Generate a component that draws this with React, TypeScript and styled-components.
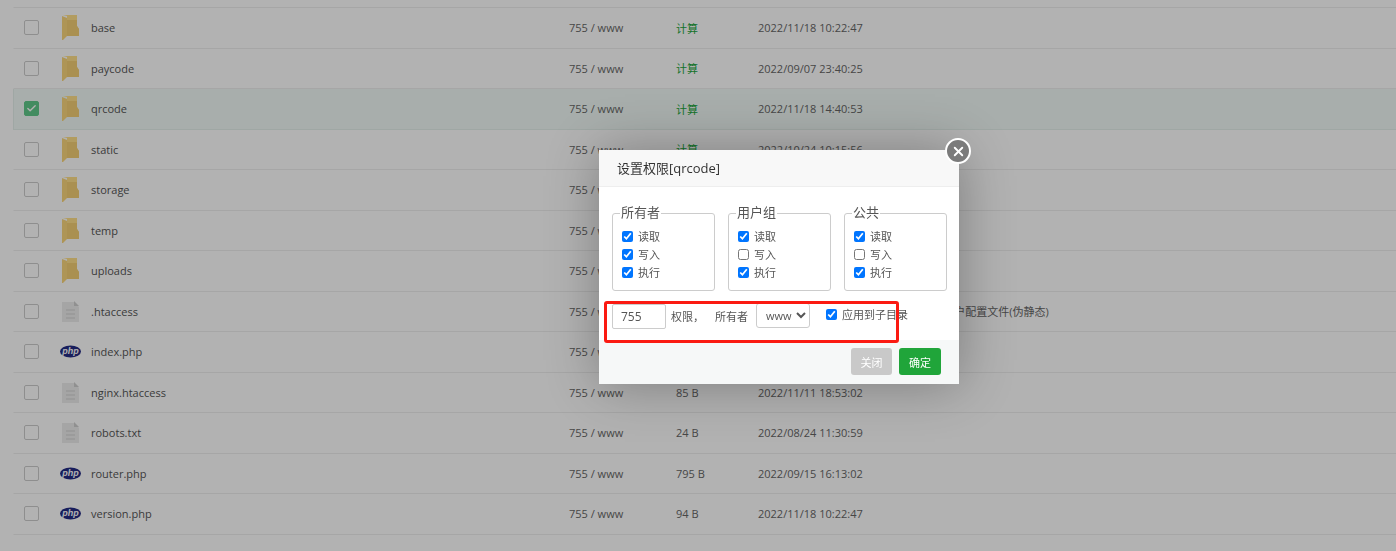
import React from 'react';
import styled, { createGlobalStyle } from 'styled-components';
import { Check, X } from 'lucide-react';

type FileKind = 'folder' | 'file' | 'php';

type FileRow = {
  name: string;
  kind: FileKind;
  size: string;
  date: string;
  remark?: string;
  selected?: boolean;
};

const rows: FileRow[] = [
  { name: 'app', kind: 'folder', size: '计算', date: '2022/11/18 10:22:47' },
  { name: 'base', kind: 'folder', size: '计算', date: '2022/11/18 10:22:47' },
  { name: 'paycode', kind: 'folder', size: '计算', date: '2022/09/07 23:40:25' },
  { name: 'qrcode', kind: 'folder', size: '计算', date: '2022/11/18 14:40:53', selected: true },
  { name: 'static', kind: 'folder', size: '计算', date: '2022/10/24 10:15:56' },
  { name: 'storage', kind: 'folder', size: '计算', date: '2022/10/24 10:15:56' },
  { name: 'temp', kind: 'folder', size: '计算', date: '2022/11/18 10:22:47' },
  { name: 'uploads', kind: 'folder', size: '计算', date: '2022/11/18 10:22:47' },
  { name: '.htaccess', kind: 'file', size: '0 B', date: '2022/11/11 18:53:02', remark: 'PHP用户配置文件(伪静态)' },
  { name: 'index.php', kind: 'php', size: '1 KB', date: '2022/11/18 10:22:47' },
  { name: 'nginx.htaccess', kind: 'file', size: '85 B', date: '2022/11/11 18:53:02' },
  { name: 'robots.txt', kind: 'file', size: '24 B', date: '2022/08/24 11:30:59' },
  { name: 'router.php', kind: 'php', size: '795 B', date: '2022/09/15 16:13:02' },
  { name: 'version.php', kind: 'php', size: '94 B', date: '2022/11/18 10:22:47' },
];

const groups = [
  { title: '所有者', read: true, write: true, run: true },
  { title: '用户组', read: true, write: false, run: true },
  { title: '公共', read: true, write: false, run: true },
];

const GlobalStyle = createGlobalStyle`
  html, body {
    margin: 0;
    height: 100%;
    background: #fff;
    overflow: hidden;
  }
  body {
    font-family: "Open Sans", "Noto Sans CJK SC", sans-serif;
    font-size: 11px;
    color: #555;
  }
`;

const Page = styled.div`
  height: 551px;
  overflow: hidden;
  padding-left: 13px;
`;

const Table = styled.div`
  margin-top: -32.5px;
`;

const Row = styled.div<{ $selected?: boolean }>`
  display: grid;
  grid-template-columns: 38px 29px 478px 107px 82px 164px 1fr;
  align-items: center;
  box-sizing: border-box;
  height: 40.5px;
  padding-left: 10px;
  background: ${({ $selected }) => ($selected ? '#f1faf6' : 'transparent')};
  border-bottom: 1px solid ${({ $selected }) => ($selected ? '#e4efeb' : '#eee')};
  border-left: 1px solid ${({ $selected }) => ($selected ? '#e4efeb' : 'transparent')};
`;

const RowCheck = styled.span<{ $checked?: boolean }>`
  display: flex;
  align-items: center;
  justify-content: center;
  box-sizing: border-box;
  width: 15px;
  height: 15px;
  border: 1px solid ${({ $checked }) => ($checked ? '#5fc98a' : '#ccc')};
  border-radius: 2px;
  background: ${({ $checked }) => ($checked ? '#5fc98a' : '#fff')};
  color: #fff;
`;

const IconCell = styled.span`
  display: flex;
  justify-content: center;
  width: 17px;
`;

const Name = styled.span`
  color: #555;
`;

const Muted = styled.span`
  color: #666;
`;

const SizeLink = styled.span<{ $link?: boolean }>`
  color: ${({ $link }) => ($link ? '#20a53a' : '#666')};
`;

const Mask = styled.div`
  position: fixed;
  inset: 0;
  background: rgba(0, 0, 0, 0.3);
`;

const Dialog = styled.div`
  position: absolute;
  left: 599px;
  top: 150px;
  width: 360px;
  background: #fff;
  box-shadow: 1px 1px 50px rgba(0, 0, 0, 0.3);
`;

const DialogHeader = styled.div`
  box-sizing: border-box;
  height: 37px;
  padding: 0 18px;
  line-height: 37px;
  font-size: 13px;
  color: #333;
  background: #f8f8f8;
  border-bottom: 1px solid #eee;
`;

const CloseButton = styled.button`
  position: absolute;
  top: -12px;
  right: -12px;
  display: flex;
  align-items: center;
  justify-content: center;
  box-sizing: border-box;
  width: 26px;
  height: 26px;
  padding: 0;
  border: 2px solid #fff;
  border-radius: 50%;
  background: #7b7b7b;
  color: #fff;
`;

const DialogBody = styled.div`
  height: 153px;
  padding: 18px 12px 0 13px;
  box-sizing: border-box;
`;

const Groups = styled.div`
  display: flex;
  gap: 13px;
`;

const Group = styled.fieldset`
  box-sizing: border-box;
  width: 103px;
  height: 86px;
  margin: 0;
  padding: 6px 9px 0;
  border: 1px solid #ccc;
  border-radius: 3px;
  min-width: 0;
`;

const GroupTitle = styled.legend`
  margin-left: -2px;
  padding: 0 1px 2px;
  font-size: 13px;
  line-height: 14px;
  color: #555;
`;

const CheckLine = styled.label`
  display: flex;
  align-items: center;
  height: 18px;
  gap: 5px;
  font-size: 11px;
  color: #555;
`;

const Tick = styled.input`
  width: 11px;
  height: 11px;
  margin: 0;
  accent-color: #0075ff;
`;

const OptionsRow = styled.div`
  display: flex;
  align-items: center;
  margin-top: 12px;
  height: 26px;
`;

const ModeInput = styled.input`
  box-sizing: border-box;
  width: 54px;
  height: 25px;
  padding: 0 8px;
  border: 1px solid #ccc;
  border-radius: 2px;
  font: inherit;
  font-size: 12px;
  color: #555;
  outline: none;
`;

const OptionText = styled.span`
  font-size: 11px;
  color: #555;
  margin-left: 5px;
  width: 39px;
`;

const OwnerLabel = styled(OptionText)`
  margin-left: 5px;
  width: 41px;
`;

const OwnerSelect = styled.select`
  box-sizing: border-box;
  width: 54px;
  height: 25px;
  padding: 0 0 0 5px;
  border: 1px solid #ccc;
  border-radius: 3px;
  background: #fff;
  font: inherit;
  font-size: 11px;
  color: #555;
  margin-top: -2px;
`;

const RecursiveLabel = styled.label`
  display: flex;
  align-items: center;
  gap: 5px;
  margin-left: 16px;
  margin-top: -4px;
  font-size: 11px;
  color: #555;
`;

const DialogFooter = styled.div`
  display: flex;
  justify-content: flex-end;
  gap: 7px;
  box-sizing: border-box;
  height: 44px;
  padding: 8px 18px 0;
  background: #f6f8f8;
`;

const FooterButton = styled.button<{ $primary?: boolean }>`
  box-sizing: border-box;
  width: ${({ $primary }) => ($primary ? '42px' : '41px')};
  height: 27px;
  padding: 0;
  border: none;
  border-radius: 3px;
  background: ${({ $primary }) => ($primary ? '#20a53a' : '#c9c9c9')};
  color: #fff;
  font: inherit;
  font-size: 11px;
`;

const Annotation = styled.div`
  position: absolute;
  left: 604px;
  top: 301px;
  width: 295px;
  height: 42px;
  box-sizing: border-box;
  border: 3px solid #fb1a12;
  border-radius: 3px;
  pointer-events: none;
`;

function FolderIcon() {
  return (
    <svg width="17" height="25" viewBox="0 0 17 25">
      <path d="M1 0H15V11L17 14V21H5V1Z" fill="#ffe08a" />
      <path d="M5 5H15V11L17 14V21H5Z" fill="#f4cf75" />
      <path d="M0 1L5 3V21L1 25H0Z" fill="#f9d67c" />
    </svg>
  );
}

function DocIcon() {
  return (
    <svg width="17" height="21" viewBox="0 0 17 21">
      <path d="M0 1H12L17 6V21H0Z" fill="#ececec" />
      <path d="M12 0L17 5H12Z" fill="#cfcfcf" />
      <path d="M4 9H13M4 13H13M4 17H13" stroke="#d2d2d2" strokeWidth="1.2" />
    </svg>
  );
}

function PhpIcon() {
  return (
    <svg width="21" height="13" viewBox="0 0 21 13" style={{ margin: '0 -2px' }}>
      <ellipse cx="10.5" cy="6.5" rx="10.5" ry="6" fill="#232b85" />
      <text
        x="10.5"
        y="9"
        textAnchor="middle"
        fill="#fff"
        fontSize="9"
        fontStyle="italic"
        fontWeight="700"
        fontFamily="Liberation Sans, sans-serif"
      >
        php
      </text>
    </svg>
  );
}

function FileIcon({ kind }: { kind: FileKind }) {
  if (kind === 'folder') return <FolderIcon />;
  if (kind === 'php') return <PhpIcon />;
  return <DocIcon />;
}

export default function App() {
  return (
    <>
      <GlobalStyle />
      <Page>
        <Table>
          {rows.map((row) => (
            <Row key={row.name} $selected={row.selected}>
              <RowCheck $checked={row.selected}>
                {row.selected && <Check size={11} strokeWidth={3} />}
              </RowCheck>
              <IconCell>
                <FileIcon kind={row.kind} />
              </IconCell>
              <Name>{row.name}</Name>
              <Muted>755 / www</Muted>
              <SizeLink $link={row.kind === 'folder'}>{row.size}</SizeLink>
              <Muted>{row.date}</Muted>
              <Muted>{row.remark}</Muted>
            </Row>
          ))}
        </Table>
      </Page>
      <Mask />
      <Dialog>
        <DialogHeader>设置权限[qrcode]</DialogHeader>
        <CloseButton aria-label="关闭">
          <X size={15} strokeWidth={3} />
        </CloseButton>
        <DialogBody>
          <Groups>
            {groups.map((group) => (
              <Group key={group.title}>
                <GroupTitle>{group.title}</GroupTitle>
                <CheckLine>
                  <Tick type="checkbox" defaultChecked={group.read} />
                  读取
                </CheckLine>
                <CheckLine>
                  <Tick type="checkbox" defaultChecked={group.write} />
                  写入
                </CheckLine>
                <CheckLine>
                  <Tick type="checkbox" defaultChecked={group.run} />
                  执行
                </CheckLine>
              </Group>
            ))}
          </Groups>
          <OptionsRow>
            <ModeInput defaultValue="755" />
            <OptionText>权限，</OptionText>
            <OwnerLabel>所有者</OwnerLabel>
            <OwnerSelect defaultValue="www">
              <option value="www">www</option>
            </OwnerSelect>
            <RecursiveLabel>
              <Tick type="checkbox" defaultChecked />
              应用到子目录
            </RecursiveLabel>
          </OptionsRow>
        </DialogBody>
        <DialogFooter>
          <FooterButton>关闭</FooterButton>
          <FooterButton $primary>确定</FooterButton>
        </DialogFooter>
      </Dialog>
      <Annotation />
    </>
  );
}
